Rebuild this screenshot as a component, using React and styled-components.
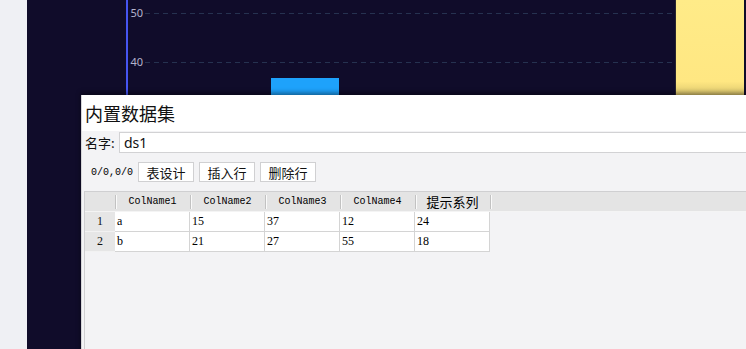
import React from 'react'
import styled, { createGlobalStyle } from 'styled-components'

const GlobalStyle = createGlobalStyle`
  html, body {
    margin: 0;
    padding: 0;
    background: #eff0f4;
    font-family: "Noto Sans", "Noto Sans CJK SC", sans-serif;
  }
`

const Page = styled.div`
  position: relative;
  display: flex;
  width: 746px;
  height: 349px;
  overflow: hidden;
`

const SideStrip = styled.div`
  width: 27px;
  flex-shrink: 0;
  background: #eff0f4;
`

const ChartPanel = styled.div`
  flex: 1;
  background: #100c2a;
`

const Dialog = styled.div`
  position: absolute;
  left: 81px;
  top: 95px;
  right: -30px;
  bottom: -30px;
  display: flex;
  flex-direction: column;
  background: #f3f3f5;
  border-left: 1px solid #d6d6d8;
  box-shadow: 0 -2px 5px rgba(0, 0, 0, 0.45);
`

const TitleBar = styled.div`
  height: 36px;
  display: flex;
  align-items: center;
  padding-left: 3px;
  background: #fff;
  font-family: "Noto Sans CJK SC", sans-serif;
  font-size: 18px;
  color: #111;
`

const NameRow = styled.div`
  display: flex;
  align-items: center;
  margin-top: 1px;
  padding-left: 3px;
`

const Label = styled.span`
  width: 34px;
  font-family: "Noto Sans CJK SC", sans-serif;
  font-size: 13px;
  color: #111;
`

const NameInput = styled.div`
  flex: 1;
  height: 19px;
  display: flex;
  align-items: center;
  padding-left: 4px;
  background: #fff;
  border: 1px solid #d2d2d4;
  border-right: none;
  font-family: "Noto Sans", sans-serif;
  font-size: 14px;
  color: #111;
`

const Toolbar = styled.div`
  display: flex;
  align-items: center;
  gap: 5px;
  margin-top: 9px;
  padding-left: 9px;
`

const Counter = styled.span`
  font-family: "Liberation Mono", monospace;
  font-size: 10px;
  color: #000;
`

const ToolButton = styled.div`
  width: 54px;
  height: 18px;
  display: flex;
  align-items: center;
  justify-content: center;
  background: #fff;
  border: 1px solid #d0d0d2;
  font-family: "Noto Sans CJK SC", sans-serif;
  font-size: 13px;
  color: #111;
`

const Grid = styled.div`
  flex: 1;
  margin: 9px 0 0 2px;
  border-top: 1px solid #cfcfd1;
  border-left: 1px solid #cfcfd1;
`

const HeaderRow = styled.div`
  display: grid;
  grid-template-columns: 30px repeat(5, 75px) 1fr;
  height: 19px;
  background: #e4e4e4;
  border-bottom: 1px solid #f4f4f4;
`

const HeaderCell = styled.div`
  position: relative;
  display: flex;
  align-items: center;
  justify-content: center;
  font-family: ${p => (p.cjk ? '"Noto Sans CJK SC", sans-serif' : '"Liberation Mono", monospace')};
  font-size: ${p => (p.cjk ? '13px' : '10px')};
  color: #000;

  &::after {
    content: ${p => (p.filler ? 'none' : '""')};
    position: absolute;
    right: -1px;
    top: 3px;
    bottom: 2px;
    width: 1px;
    background: #c2c2c2;
    box-shadow: 1px 0 0 #fafafa;
  }
`

const DataRow = styled.div`
  display: grid;
  grid-template-columns: 30px repeat(5, 75px);
  height: 20px;
`

const RowNumber = styled.div`
  display: flex;
  align-items: center;
  justify-content: center;
  background: #e6e6e6;
  border-bottom: 1px solid #f2f2f2;
  font-family: "Liberation Serif", serif;
  font-size: 12px;
  color: #111;
`

const Cell = styled.div`
  display: flex;
  align-items: center;
  padding-left: 2px;
  background: #fff;
  border-right: 1px solid #d4d4d4;
  border-bottom: 1px solid #d4d4d4;
  font-family: "Liberation Serif", serif;
  font-size: 12px;
  color: #000;
`

const columns = ['ColName1', 'ColName2', 'ColName3', 'ColName4']

const rows = [
  ['a', '15', '37', '12', '24'],
  ['b', '21', '27', '55', '18']
]

const BarChart = () => (
  <svg width="719" height="349" viewBox="0 0 719 349">
    <defs>
      <linearGradient id="yellowBar" x1="0" y1="0" x2="0" y2="1">
        <stop offset="0" stopColor="#ffeb88" />
        <stop offset="0.85" stopColor="#ffe782" />
        <stop offset="1" stopColor="#d9c46c" />
      </linearGradient>
    </defs>
    <g stroke="#263250" strokeWidth="1" strokeDasharray="5 4">
      <line x1="118" y1="13.5" x2="719" y2="13.5" />
      <line x1="118" y1="62.5" x2="719" y2="62.5" />
    </g>
    <g fill="#b4b3cc" fontFamily="Noto Sans, sans-serif" fontSize="11" textAnchor="end">
      <text x="116" y="17">50</text>
      <text x="116" y="66">40</text>
    </g>
    <rect x="99" y="0" width="2" height="349" fill="#4655f2" />
    <rect x="244" y="78" width="68" height="40" fill="#1ea2fb" />
    <rect x="649" y="0" width="68" height="96" fill="url(#yellowBar)" />
    <rect x="648" y="0" width="1" height="96" fill="#2a2630" />
  </svg>
)

const App = () => (
  <Page>
    <GlobalStyle />
    <SideStrip />
    <ChartPanel>
      <BarChart />
    </ChartPanel>
    <Dialog>
      <TitleBar>内置数据集</TitleBar>
      <NameRow>
        <Label>名字:</Label>
        <NameInput>ds1</NameInput>
      </NameRow>
      <Toolbar>
        <Counter>0/0,0/0</Counter>
        <ToolButton>表设计</ToolButton>
        <ToolButton>插入行</ToolButton>
        <ToolButton>删除行</ToolButton>
      </Toolbar>
      <Grid>
        <HeaderRow>
          <HeaderCell />
          {columns.map(name => (
            <HeaderCell key={name}>{name}</HeaderCell>
          ))}
          <HeaderCell cjk>提示系列</HeaderCell>
          <HeaderCell filler />
        </HeaderRow>
        {rows.map((row, i) => (
          <DataRow key={i}>
            <RowNumber>{i + 1}</RowNumber>
            {row.map((value, j) => (
              <Cell key={j}>{value}</Cell>
            ))}
          </DataRow>
        ))}
      </Grid>
    </Dialog>
  </Page>
)

export default App
